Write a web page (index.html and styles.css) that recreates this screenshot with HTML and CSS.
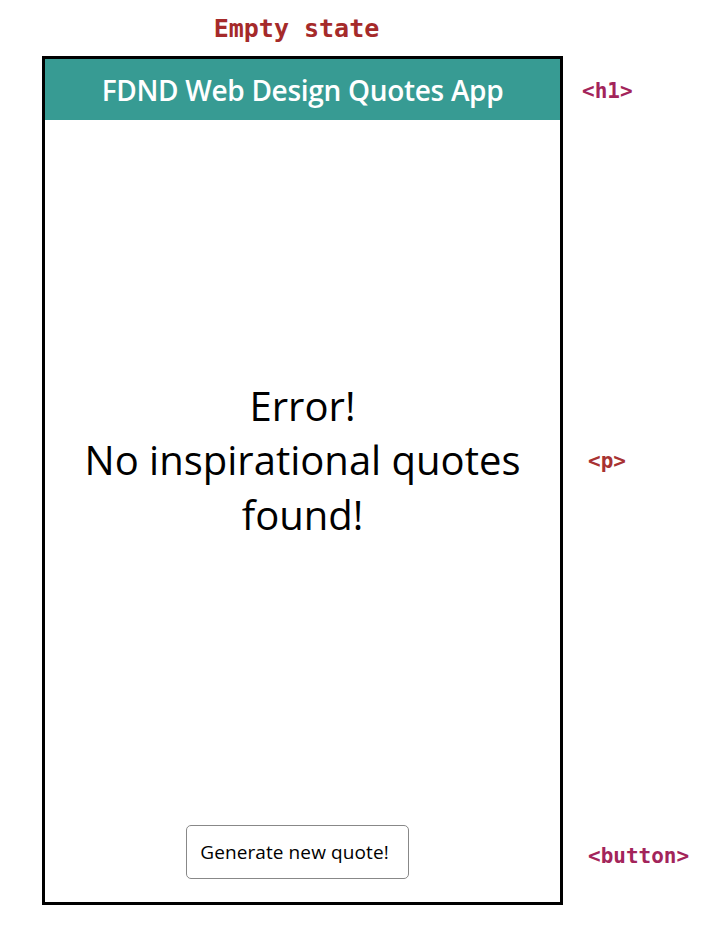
FILE: index.html
```html
<!DOCTYPE html>
<html lang="en">
<head>
<meta charset="utf-8">
<title>Empty state</title>
<link rel="stylesheet" href="styles.css">
</head>
<body>
<div class="page">
  <div class="state-title">Empty state</div>
  <div class="board">
    <div class="frame"></div>
    <h1 class="app-title">FDND Web Design Quotes App</h1>
    <p class="message">Error!<br>No inspirational quotes<br>found!</p>
    <button class="generate" type="button">Generate new quote!</button>
    <span class="tag tag-h1">&lt;h1&gt;</span>
    <span class="tag tag-p">&lt;p&gt;</span>
    <span class="tag tag-button">&lt;button&gt;</span>
  </div>
</div>
</body>
</html>
```
FILE: styles.css
```css
* { box-sizing: border-box; }
html, body { margin: 0; padding: 0; background: #fff; }
body { font-family: "Open Sans", "Liberation Sans", sans-serif; color: #000; }

.page {
  padding-left: 42px;
}

.state-title {
  width: 521px;
  height: 56px;
  display: flex;
  align-items: center;
  justify-content: center;
  padding-right: 12px;
  font-family: "DejaVu Sans Mono", "Liberation Mono", monospace;
  font-weight: bold;
  font-size: 25px;
  color: #a52a2a;
}

.board {
  display: grid;
  grid-template-columns: 521px auto;
  grid-template-rows: 64px 705px 80px;
}

.frame {
  grid-area: 1 / 1 / 4 / 2;
  border: 3px solid #000;
}

.app-title {
  grid-area: 1 / 1;
  margin: 3px 3px 0;
  background: #379b93;
  color: #fff;
  font-size: 28px;
  font-weight: 600;
  text-align: center;
  line-height: 62px;
  height: 61px;
  letter-spacing: -0.3px;
}

.message {
  grid-area: 2 / 1;
  align-self: center;
  margin: 0 0 24px;
  text-align: center;
  font-size: 40px;
  line-height: 54.5px;
}

.generate {
  grid-area: 3 / 1;
  justify-self: center;
  align-self: start;
  margin-right: 10px;
  width: 223px;
  height: 54px;
  background: #fff;
  border: 1px solid #888;
  border-radius: 5px;
  font-family: "Open Sans", "Liberation Sans", sans-serif;
  font-size: 19px;
  color: #000;
  padding: 0 6px 0 0;
  letter-spacing: 0.1px;
}

.tag {
  grid-column: 2;
  font-family: "DejaVu Sans Mono", "Liberation Mono", monospace;
  font-weight: bold;
  font-size: 21px;
  line-height: 24px;
}
.tag-h1 {
  grid-row: 1;
  align-self: center;
  margin: 5px 0 0 19px;
  color: #a3245a;
}
.tag-p {
  grid-row: 2;
  align-self: center;
  margin: 0 0 24px 25px;
  color: #a83232;
}
.tag-button {
  grid-row: 3;
  align-self: start;
  margin: 19px 0 0 25px;
  color: #a3245a;
}
```
